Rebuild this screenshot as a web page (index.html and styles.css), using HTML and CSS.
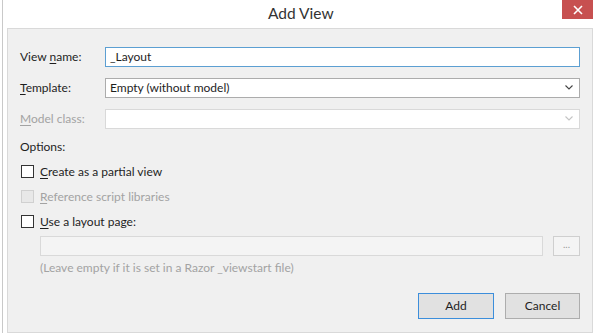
FILE: index.html
```html
<!DOCTYPE html>
<html>
<head>
<meta charset="utf-8">
<link rel="stylesheet" href="styles.css">
</head>
<body>
<div class="window">
  <div class="titlebar">
    <div class="title">Add View</div>
    <div class="close">
      <svg width="10" height="10" viewBox="0 0 10 10"><path d="M1 1L9 9M9 1L1 9" stroke="#fff" stroke-width="1.6"/></svg>
    </div>
  </div>
  <div class="panel">
    <div class="fields">
      <label class="label">View <u>n</u>ame:</label>
      <div class="input focused">_Layout</div>
      <label class="label"><u>T</u>emplate:</label>
      <div class="input select">Empty (without model)
        <svg class="chev" width="8" height="5" viewBox="0 0 8 5"><path d="M0.5 0.5L4 4L7.5 0.5" fill="none" stroke="#444" stroke-width="1.1"/></svg>
      </div>
      <label class="label disabled"><u>M</u>odel class:</label>
      <div class="input select off">
        <svg class="chev" width="8" height="5" viewBox="0 0 8 5"><path d="M0.5 0.5L4 4L7.5 0.5" fill="none" stroke="#c4c4c4" stroke-width="1.1"/></svg>
      </div>
    </div>
    <div class="options-title">Options:</div>
    <div class="check-row"><span class="box"></span><span><u>C</u>reate as a partial view</span></div>
    <div class="check-row disabled"><span class="box off"></span><span><u>R</u>eference script libraries</span></div>
    <div class="check-row"><span class="box"></span><span><u>U</u>se a layout page:</span></div>
    <div class="layout-row">
      <div class="input off grow"></div>
      <div class="browse">...</div>
    </div>
    <div class="hint">(Leave empty if it is set in a Razor _viewstart file)</div>
    <div class="buttons">
      <div class="btn default">Add</div>
      <div class="btn">Cancel</div>
    </div>
  </div>
</div>
</body>
</html>
```
FILE: styles.css
```css
html, body {
  margin: 0;
  padding: 0;
}
body {
  width: 600px;
  height: 333px;
  background: #ffffff;
  font-family: "Lato", "Noto Sans", sans-serif;
  font-size: 12px;
  color: #1e1e1e;
  overflow: hidden;
}
.window {
  margin-left: 2px;
  height: 333px;
  border-left: 1px solid #c9c9c9;
  display: flex;
  flex-direction: column;
}
.titlebar {
  height: 29px;
  display: flex;
  align-items: flex-start;
}
.title {
  margin-left: 265px;
  margin-top: 4px;
  font-size: 15.5px;
  color: #333;
}
.close {
  margin-left: auto;
  margin-right: 7px;
  width: 31px;
  height: 19px;
  background: #c75050;
  display: flex;
  align-items: center;
  justify-content: center;
}
.panel {
  margin: 0 7px 0 4px;
  height: 296px;
  background: #f0f0f0;
  border: 1px solid #d9d9d9;
  padding: 18px 12px 0 12px;
  display: flex;
  flex-direction: column;
}
.fields {
  display: grid;
  grid-template-columns: 85px 1fr;
  row-gap: 11px;
  align-items: center;
}
.label {
  line-height: 16px;
}
.disabled {
  color: #a3a3a3;
}
.input {
  height: 18px;
  border: 1px solid #acacac;
  background: #fff;
  padding: 0 4px;
  line-height: 18px;
  display: flex;
  align-items: center;
}
.input.focused {
  border-color: #5c9fd2;
}
.input.off {
  border-color: #d9d9d9;
}
.input.grow {
  flex: 1;
  background: #f4f4f4;
}
.chev {
  margin-left: auto;
  margin-right: 2px;
}
.options-title {
  margin-top: 10px;
  line-height: 16px;
}
.check-row {
  display: flex;
  align-items: center;
  height: 16px;
  margin-top: 9px;
  gap: 6px;
  line-height: 16px;
}
.check-row:first-of-type {
  margin-top: 8px;
}
.box {
  width: 11px;
  height: 11px;
  border: 1px solid #333;
  background: #fff;
  margin-left: 1px;
}
.box.off {
  border-color: #d0d0d0;
  background: #e8e8e8;
}
.layout-row {
  display: flex;
  margin-top: 6px;
  margin-left: 20px;
  gap: 10px;
}
.browse {
  width: 25px;
  height: 18px;
  border: 1px solid #cfcfcf;
  background: #f4f4f4;
  color: #999;
  font-size: 10px;
  line-height: 14px;
  text-align: center;
}
.hint {
  margin-left: 20px;
  margin-top: 4px;
  color: #a3a3a3;
  line-height: 16px;
}
.buttons {
  display: flex;
  justify-content: flex-end;
  gap: 11px;
  margin-top: 17px;
}
.btn {
  width: 73px;
  height: 24px;
  border: 1px solid #adadad;
  background: #e1e1e1;
  line-height: 24px;
  text-align: center;
}
.btn.default {
  width: 74px;
  border-color: #3c8edb;
}
u {
  text-decoration: underline;
  text-underline-offset: 2px;
}
```
